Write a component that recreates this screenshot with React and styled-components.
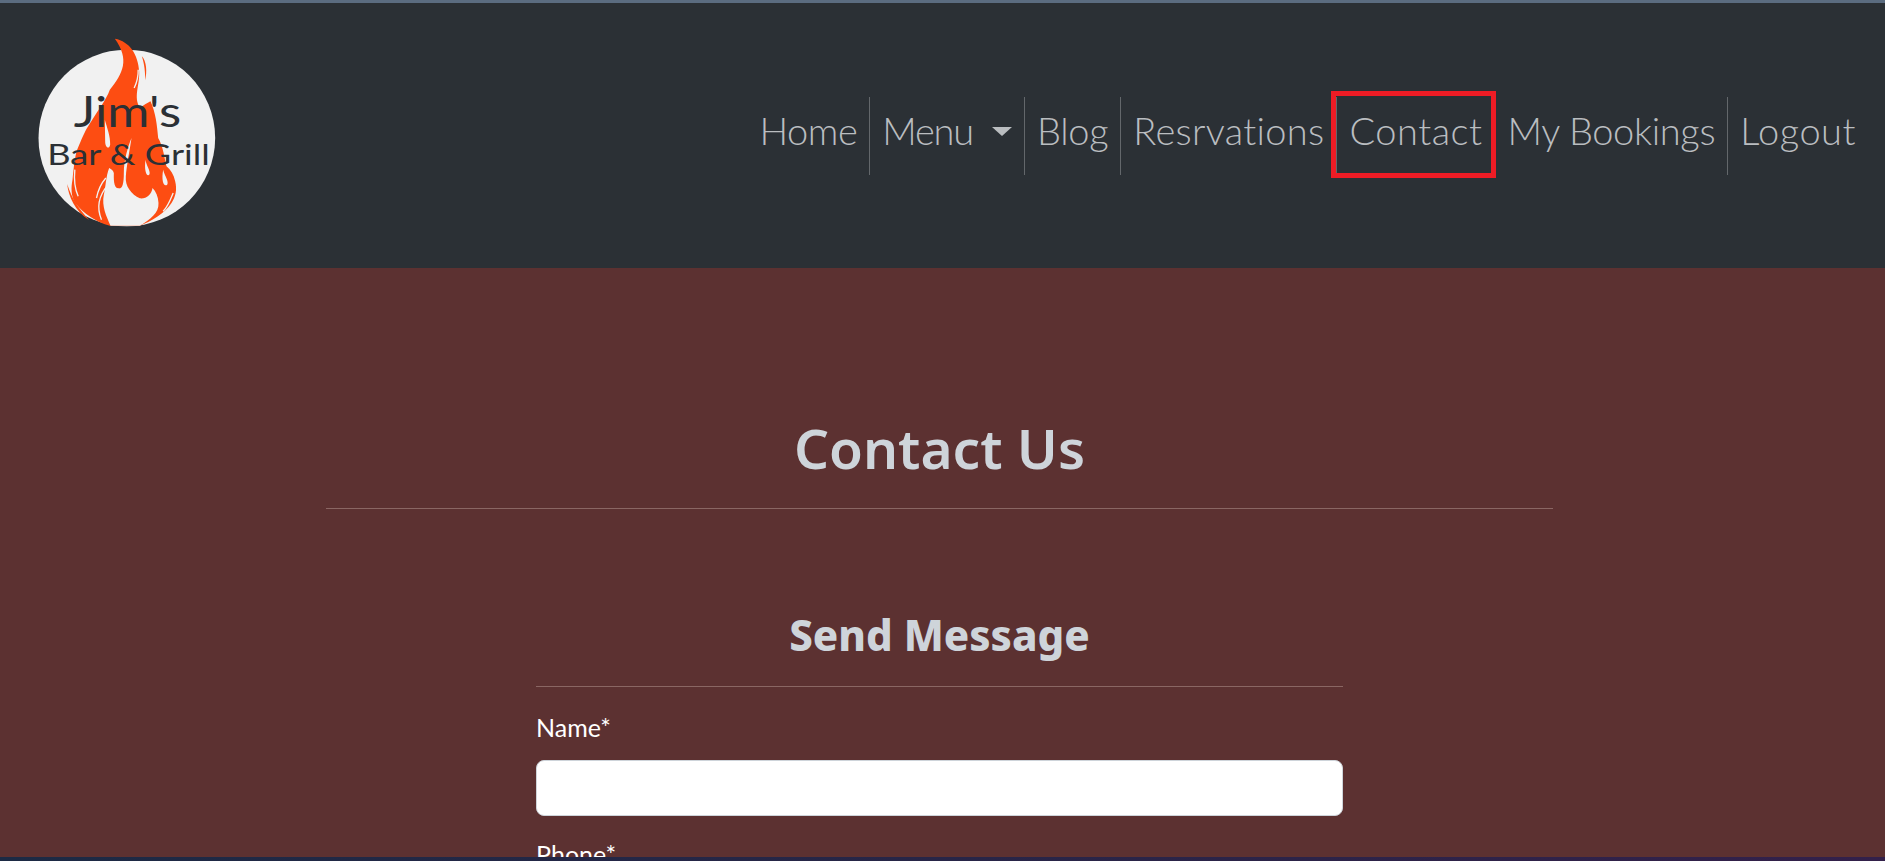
import React from 'react'
import styled, { createGlobalStyle } from 'styled-components'

const GlobalStyle = createGlobalStyle`
    * {
        box-sizing: border-box;
    }

    body {
        margin: 0;
        font-family: 'Lato', 'Liberation Sans', sans-serif;
    }
`

const Page = styled.div`
    display: flex;
    flex-direction: column;
    height: 100vh;
    overflow: hidden;
    background: #5c3131;
`

const TopStrip = styled.div`
    flex: none;
    height: 3px;
    background: #5b6c80;
`

const Header = styled.header`
    flex: none;
    display: flex;
    height: 265px;
    padding: 30px 17px 0 33px;
    justify-content: space-between;
    align-items: flex-start;
    background: #2b3035;
`

const NavList = styled.nav`
    display: flex;
    margin-top: 64px;
    align-items: stretch;
`

const NavItem = styled.a`
    position: relative;
    display: flex;
    height: 78px;
    padding: 0 12px 12px;
    align-items: center;
    gap: 19px;
    font-size: 38px;
    font-weight: 300;
    letter-spacing: ${props => props.$spacing || 0}px;
    color: #babdc0;
    border-right: ${props => props.$last ? 'none' : '1px solid #63676b'};
`

const Caret = styled.span`
    width: 0;
    height: 0;
    margin-top: 2px;
    border-top: 9px solid #babdc0;
    border-left: 10px solid transparent;
    border-right: 10px solid transparent;
`

// hand drawn annotation box that sits on top of the Contact link
const RedBox = styled.span`
    position: absolute;
    top: -6px;
    left: -6px;
    right: -2px;
    bottom: -3px;
    border: 5px solid #ee1c25;
    pointer-events: none;
`

const Main = styled.main`
    flex: 1;
    min-height: 0;
    overflow: hidden;
    padding: 142px 6px 0 0;
`

const Section = styled.section`
    width: 1227px;
    margin: 0 auto;
`

const Title = styled.h1`
    margin: 0;
    padding-bottom: 22px;
    font-family: 'Noto Sans', sans-serif;
    font-size: 55px;
    line-height: 76px;
    font-weight: 600;
    text-align: center;
    color: #ced4da;
    border-bottom: 1px solid #8a6663;
`

const Form = styled.form`
    width: 807px;
    margin: 0 auto;
    padding-top: 98px;
`

const FormTitle = styled.h2`
    margin: 0 0 26px;
    padding-bottom: 23px;
    font-family: 'Noto Sans', sans-serif;
    font-size: 42px;
    line-height: 56px;
    font-weight: 800;
    text-align: center;
    color: #ced4da;
    border-bottom: 1px solid #8a6663;
`

const Field = styled.div`
    display: flex;
    flex-direction: column;
    margin-bottom: 24px;
`

const Label = styled.label`
    margin-bottom: 19px;
    font-size: 25px;
    line-height: 28px;
    color: #fff;
`

const Input = styled.input`
    height: 56px;
    padding: 0 12px;
    background: #fff;
    border: 1px solid #ced4da;
    border-radius: 8px;
`

const BottomStrip = styled.div`
    flex: none;
    height: 4px;
    background: linear-gradient(90deg, #1c2a44, #33204a);
`

const LogoSvg = styled.svg`
    flex: none;
    width: 187px;
    height: 200px;
`

function Logo() {
    return (
        <LogoSvg viewBox="100 100 560 600" role="img" aria-label="Jim's Bar & Grill">
            <circle cx="381" cy="415" r="265" fill="#f1f1f1" />
            <path
                fill="#fd4d12"
                d="M345 117 C390 125 415 165 418 215 C420 260 400 290 420 325 C430 318 445 308 452 305 C468 340 472 380 475 415 C490 440 495 480 500 500 C512 510 522 525 526 545 C532 570 528 590 515 610 C495 640 455 665 420 678 L330 678 C290 668 250 640 228 612 C212 590 214 560 218 540 C222 500 225 470 232 450 C245 420 255 395 265 380 C285 345 320 300 330 270 C370 220 390 180 345 117 Z"
            />
            <path fill="#fd4d12" d="M202 553 C206 590 225 635 268 661 C235 625 215 595 202 553 Z" />
            <path fill="#fd4d12" d="M426 170 C440 185 442 215 436 242 C436 215 434 195 426 170 Z" />
            <path
                fill="#f1f1f1"
                d="M328 505 C318 530 318 560 312 585 C305 620 320 650 332 678 L420 678 C450 660 478 640 476 610 C475 590 468 575 458 565 C455 585 440 598 420 596 C395 585 375 560 378 530 C380 500 390 450 395 415 C385 440 372 480 372 520 C372 550 368 568 358 566 C340 568 342 535 342 520 C340 512 335 510 328 505 Z"
            />
            <path fill="#f1f1f1" d="M315 360 C322 385 332 410 331 435 C328 450 316 445 316 425 Z" />
            <path fill="#f1f1f1" d="M437 480 C440 500 452 512 449 524 C442 534 432 515 437 480 Z" />
            <path fill="#f1f1f1" d="M490 510 C495 530 508 545 502 555 C492 562 484 545 490 510 Z" />
            <path
                fill="none"
                stroke="#f1f1f1"
                strokeWidth="4"
                d="M290 595 C295 570 305 550 318 535 M305 660 C290 625 295 590 325 555 M225 510 C222 540 226 570 235 590 M520 580 C512 600 505 620 490 635 M415 210 C416 235 410 250 403 265"
            />
            <text x="222" y="382" fontFamily="Lato, sans-serif" fontSize="128" fill="#2b3035" textLength="322" lengthAdjust="spacingAndGlyphs">Jim's</text>
            <text x="142" y="495" fontFamily="Lato, sans-serif" fontSize="84" fill="#2b3035" textLength="488" lengthAdjust="spacingAndGlyphs">Bar &amp; Grill</text>
        </LogoSvg>
    )
}

export default function App() {
    return (
        <>
            <GlobalStyle />
            <Page>
                <TopStrip />
                <Header>
                    <Logo />
                    <NavList>
                        <NavItem $spacing={-0.5}>Home</NavItem>
                        <NavItem $spacing={-1.2}>Menu<Caret /></NavItem>
                        <NavItem $spacing={-0.3}>Blog</NavItem>
                        <NavItem $spacing={0.3}>Resrvations</NavItem>
                        <NavItem $spacing={0.5}>Contact<RedBox /></NavItem>
                        <NavItem $spacing={-0.35}>My Bookings</NavItem>
                        <NavItem $spacing={0.5} $last>Logout</NavItem>
                    </NavList>
                </Header>
                <Main>
                    <Section>
                        <Title>Contact Us</Title>
                        <Form>
                            <FormTitle>Send Message</FormTitle>
                            <Field>
                                <Label>Name*</Label>
                                <Input type="text" />
                            </Field>
                            <Field>
                                <Label>Phone*</Label>
                                <Input type="text" />
                            </Field>
                        </Form>
                    </Section>
                </Main>
                <BottomStrip />
            </Page>
        </>
    )
}
